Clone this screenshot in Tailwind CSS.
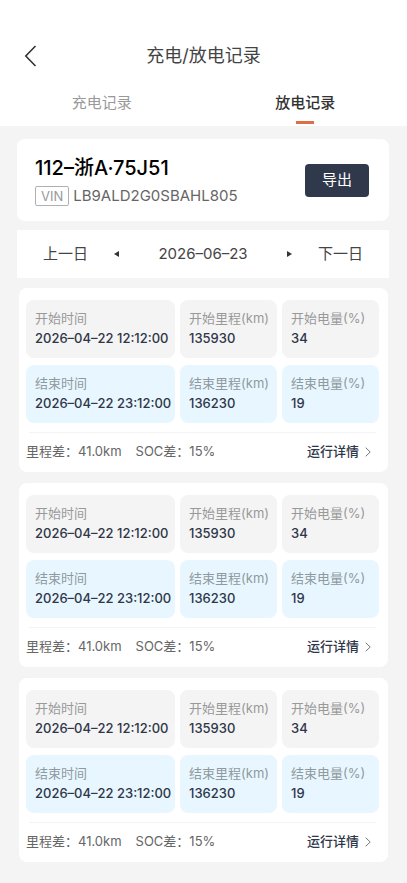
<!DOCTYPE html>
<html lang="zh-CN">
<head>
    <meta charset="UTF-8">
    <meta name="viewport" content="width=device-width, initial-scale=1.0">
    <title>充电/放电记录</title>
    <script src="https://cdn.jsdelivr.net/npm/@tailwindcss/browser@4"></script>
    <style>
        body {
            font-family: 'Inter', 'Noto Sans CJK SC', sans-serif;
        }
    </style>
</head>
<body class="min-h-screen bg-[#f4f4f4] text-[#444444]">
    <header class="bg-white pt-9">
        <div class="grid grid-cols-[1fr_auto_1fr] items-center h-10 px-6">
            <button type="button" aria-label="返回" class="w-4 h-6">
                <svg class="w-4 h-6" viewBox="0 0 16 24" fill="none" stroke="#333333" stroke-width="1.6">
                    <path d="M11.5 2 L1.8 12 L11.5 22"/>
                </svg>
            </button>
            <h1 class="text-lg leading-6">充电/放电记录</h1>
        </div>
        <nav class="grid grid-cols-2 h-[50px] text-[15px] leading-6">
            <a href="#charge" class="flex justify-center pt-[15px] text-[#999999]">充电记录</a>
            <a href="#discharge" class="flex flex-col items-center pt-[15px] font-medium text-[#333333]">
                放电记录
                <span class="w-[18px] h-[3px] mt-[6px] bg-[#dd6f46]"></span>
            </a>
        </nav>
    </header>

    <main class="pl-[17px] pr-[18px] pt-[13px] pb-5">
        <!-- 车辆 -->
        <section class="flex items-center justify-between h-[82px] pl-[18px] pr-5 bg-white rounded-lg">
            <div class="pt-1">
                <h2 class="text-xl leading-6 font-medium text-black">112–浙A·75J51</h2>
                <p class="flex items-center gap-1 mt-1 text-[15px] leading-6 text-[#666666]">
                    <span class="px-[5px] border border-[#b0b0b0] rounded-xs text-[13px] leading-[18px] text-[#999999]">VIN</span>
                    LB9ALD2G0SBAHL805
                </p>
            </div>
            <button type="button" class="w-16 h-[33px] rounded-sm bg-[#30384c] text-[15px] text-white">导出</button>
        </section>

        <!-- 日期 -->
        <section class="flex items-center justify-between h-12 mt-[9px] px-[26px] bg-white text-[15px]">
            <button type="button" class="flex items-center gap-[26px]">
                上一日
                <svg class="w-[5px] h-[6px]" viewBox="0 0 5 6" fill="#333333"><path d="M5 0V6L0 3z"/></svg>
            </button>
            <time datetime="2026-06-23">2026–06–23</time>
            <button type="button" class="flex items-center gap-[26px]">
                <svg class="w-[5px] h-[6px]" viewBox="0 0 5 6" fill="#333333"><path d="M0 0V6L5 3z"/></svg>
                下一日
            </button>
        </section>

        <div id="records" class="flex flex-col gap-[11px] mt-[10px] pl-[2px] pr-px"></div>
    </main>

    <template id="recordTemplate">
        <article class="pl-[7px] pr-[9px] pt-3 bg-white rounded-lg">
            <dl class="grid grid-cols-[149fr_97fr_97fr] gap-x-[5px] gap-y-[7px] text-[13px] leading-5 text-[#2f3648] whitespace-nowrap">
                <div class="h-[58px] pl-[9px] pt-2 rounded-lg bg-[#f4f4f4]">
                    <dt class="text-[#999999]">开始时间</dt>
                    <dd class="font-medium">2026–04–22 12:12:00</dd>
                </div>
                <div class="h-[58px] pl-[9px] pt-2 rounded-lg bg-[#f4f4f4]">
                    <dt class="text-[#999999]">开始里程(km)</dt>
                    <dd class="font-medium">135930</dd>
                </div>
                <div class="h-[58px] pl-[9px] pt-2 rounded-lg bg-[#f4f4f4]">
                    <dt class="text-[#999999]">开始电量(%)</dt>
                    <dd class="font-medium">34</dd>
                </div>
                <div class="h-[58px] pl-[9px] pt-2 rounded-lg bg-[#e8f7ff]">
                    <dt class="text-[#8f999e]">结束时间</dt>
                    <dd class="font-medium">2026–04–22 23:12:00</dd>
                </div>
                <div class="h-[58px] pl-[9px] pt-2 rounded-lg bg-[#e8f7ff]">
                    <dt class="text-[#8f999e]">结束里程(km)</dt>
                    <dd class="font-medium">136230</dd>
                </div>
                <div class="h-[58px] pl-[9px] pt-2 rounded-lg bg-[#e8f7ff]">
                    <dt class="text-[#8f999e]">结束电量(%)</dt>
                    <dd class="font-medium">19</dd>
                </div>
            </dl>
            <div class="mt-[9px] mx-[3px] border-t border-[#f4f4f4]"></div>
            <div class="flex items-center h-[39px] pr-2 pb-[2px] text-[13px] text-[#666666]">
                <span>里程差：41.0km</span>
                <span class="ml-[14px]">SOC差：15%</span>
                <a href="#detail" class="flex items-center gap-[6px] ml-auto font-medium text-[#2f3648]">
                    运行详情
                    <svg class="w-[6px] h-[10px]" viewBox="0 0 6 10" fill="none" stroke="#777777"><path d="M0.7 0.7L5.2 5L0.7 9.3"/></svg>
                </a>
            </div>
        </article>
    </template>

    <script>
        // 渲染三条放电记录
        const records = document.getElementById('records');
        const template = document.getElementById('recordTemplate');
        for (let i = 0; i < 3; i++) {
            records.appendChild(template.content.cloneNode(true));
        }
    </script>
</body>
</html>
